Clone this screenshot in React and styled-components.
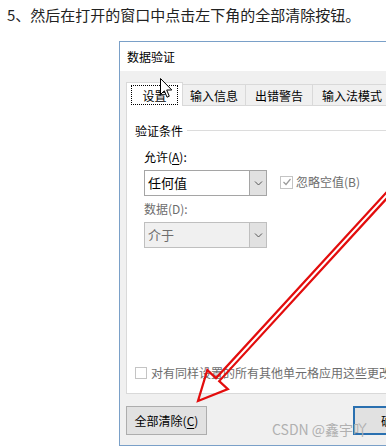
import React from 'react';
import styled, { createGlobalStyle } from 'styled-components';

const GlobalStyle = createGlobalStyle`
  html, body {
    margin:0;
    padding:0;
    background:#fff;
  }
  body {
    width:386px;
    height:446px;
    overflow:hidden;
    font-family:"Noto Sans CJK SC","Noto Sans",sans-serif;
  }
`;

const Page = styled.div`
  position:relative;
  width:386px;
  height:446px;
  overflow:hidden;
`;

const Caption = styled.p`
  margin:0;
  height:41px;
  box-sizing:border-box;
  padding:5px 0 0 7px;
  font-size:15px;
  line-height:20px;
  color:#222;
  white-space:nowrap;
`;

const Dialog = styled.div`
  margin-left:119px;
  width:409px;
  height:405px;
  box-sizing:border-box;
  border:1px solid #7aa0c8;
  background:#f0f0f0;
  display:flex;
  flex-direction:column;
  font-size:12px;
  color:#000;
`;

const TitleBar = styled.div`
  flex:none;
  height:29px;
  background:#fff;
  padding-left:7px;
  line-height:29px;
`;

const Body = styled.div`
  flex:1;
  display:flex;
  flex-direction:column;
  padding:11px 6px 0;
`;

const TabRow = styled.div`
  display:flex;
  align-items:flex-end;
  height:24px;
  margin-bottom:-1px;
  position:relative;
  z-index:1;
`;

const Tab = styled.div`
  flex:none;
  box-sizing:border-box;
  width:${p => p.$w}px;
  height:${p => (p.$active ? 24 : 22)}px;
  margin-left:${p => (p.$first ? 0 : -1)}px;
  border:1px solid #d9d9d9;
  border-bottom:${p => (p.$active ? 'none' : '1px solid #d9d9d9')};
  background:${p => (p.$active ? '#fff' : '#f0f0f0')};
  padding:${p => (p.$active ? '2px 4px 1px' : '0')};
  display:flex;
  align-items:center;
  justify-content:center;
  white-space:nowrap;
`;

const Focus = styled.div`
  flex:1;
  align-self:stretch;
  border:1px dotted #000;
  display:flex;
  align-items:center;
  justify-content:center;
`;

const Panel = styled.div`
  box-sizing:border-box;
  height:289px;
  background:#fff;
  border:1px solid #d9d9d9;
  display:flex;
  flex-direction:column;
  padding:0 0 12px 8px;
`;

const GroupHeader = styled.div`
  margin-top:17px;
  display:flex;
  align-items:center;
  gap:4px;
  line-height:16px;
`;

const Rule = styled.div`
  flex:1;
  height:1px;
  margin-top:-1px;
  background:#dcdcdc;
`;

const Fields = styled.div`
  margin-left:9px;
  display:flex;
  flex-direction:column;
`;

const FieldLabel = styled.div`
  margin-top:${p => p.$top}px;
  line-height:16px;
  color:${p => (p.$disabled ? '#6d6d6d' : '#000')};
  u { text-underline-offset:2px; }
`;

const SelectRow = styled.div`
  margin-top:5px;
  display:flex;
  align-items:flex-start;
  gap:13px;
`;

const Select = styled.div`
  box-sizing:border-box;
  width:123px;
  height:26px;
  display:flex;
  border:1px solid ${p => (p.$disabled ? '#bfbfbf' : '#a5a5a5')};
  background:${p => (p.$disabled ? '#f0f0f0' : '#fff')};
  color:${p => (p.$disabled ? '#6d6d6d' : '#000')};
  font-size:13px;
`;

const SelectValue = styled.div`
  flex:1;
  padding-left:3px;
  line-height:24px;
`;

const SelectButton = styled.div`
  width:16px;
  display:flex;
  align-items:center;
  justify-content:center;
  background:#e1e1e1;
  border-left:1px solid ${p => (p.$disabled ? '#bfbfbf' : '#a5a5a5')};
`;

const CheckLine = styled.label`
  display:flex;
  align-items:center;
  gap:${p => p.$gap}px;
  margin-top:${p => p.$top};
  line-height:16px;
  color:#6d6d6d;
  white-space:nowrap;
`;

const Box = styled.span`
  box-sizing:border-box;
  width:${p => p.$size}px;
  height:${p => p.$size}px;
  flex:none;
  border:1px solid #c4c4c4;
  background:#fff;
  display:flex;
  align-items:center;
  justify-content:center;
`;

const Footer = styled.div`
  display:flex;
  padding-top:12px;
`;

const ButtonGroup = styled.div`
  margin-left:auto;
  display:flex;
  gap:8px;
`;

const Button = styled.div`
  box-sizing:border-box;
  width:${p => p.$w}px;
  height:29px;
  background:#e1e1e1;
  border:${p => (p.$primary ? '2px solid #2a70b0' : '1px solid #adadad')};
  display:flex;
  align-items:center;
  justify-content:center;
  white-space:nowrap;
  u { text-underline-offset:2px; }
`;

const Watermark = styled.div`
  position:absolute;
  z-index:3;
  left:272px;
  top:420px;
  font-size:14px;
  line-height:18px;
  color:#b0b0b0;
  white-space:nowrap;
`;

const Overlay = styled.svg`
  position:absolute;
  z-index:2;
  left:0;
  top:0;
  pointer-events:none;
`;

const Cursor = styled.svg`
  position:absolute;
  z-index:4;
  left:160px;
  top:78px;
`;

function Chevron() {
  return (
    <svg width="9" height="6" viewBox="0 0 9 6">
      <path d="M1 1.5 L4.5 5 L8 1.5" fill="none" stroke="#555" strokeWidth="1" />
    </svg>
  );
}

function Check({ size, checked }) {
  return (
    <Box $size={size}>
      {checked && (
        <svg width="10" height="10" viewBox="0 0 10 10">
          <path d="M1.5 5 L4 7.5 L8.5 2" fill="none" stroke="#9a9a9a" strokeWidth="1.2" />
        </svg>
      )}
    </Box>
  );
}

const tabs = [
  { label: '设置', w: 57, active: true },
  { label: '输入信息', w: 64 },
  { label: '出错警告', w: 68 },
  { label: '输入法模式', w: 80 },
];

export default function App() {
  return (
    <Page>
      <GlobalStyle />
      <Caption>5、然后在打开的窗口中点击左下角的全部清除按钮。</Caption>
      <Dialog>
        <TitleBar>数据验证</TitleBar>
        <Body>
          <TabRow>
            {tabs.map((t, i) => (
              <Tab key={t.label} $w={t.w} $active={t.active} $first={i === 0}>
                {t.active ? <Focus>{t.label}</Focus> : t.label}
              </Tab>
            ))}
          </TabRow>
          <Panel>
            <GroupHeader>
              <span>验证条件</span>
              <Rule />
            </GroupHeader>
            <Fields>
              <FieldLabel $top={10}>允许(<u>A</u>):</FieldLabel>
              <SelectRow>
                <Select>
                  <SelectValue>任何值</SelectValue>
                  <SelectButton><Chevron /></SelectButton>
                </Select>
                <CheckLine $gap={3} $top="4px">
                  <Check size={13} checked />
                  忽略空值(B)
                </CheckLine>
              </SelectRow>
              <FieldLabel $top={5} $disabled>数据(D):</FieldLabel>
              <SelectRow>
                <Select $disabled>
                  <SelectValue>介于</SelectValue>
                  <SelectButton $disabled><Chevron /></SelectButton>
                </Select>
              </SelectRow>
            </Fields>
            <CheckLine $gap={4} $top="auto">
              <Check size={12} />
              对有同样设置的所有其他单元格应用这些更改(P)
            </CheckLine>
          </Panel>
          <Footer>
            <Button $w={81}>全部清除(<u>C</u>)</Button>
            <ButtonGroup>
              <Button $w={80} $primary>确定</Button>
              <Button $w={80}>取消</Button>
            </ButtonGroup>
          </Footer>
        </Body>
      </Dialog>

      <Watermark>CSDN @鑫宇吖</Watermark>

      <Overlay width="386" height="446" viewBox="0 0 386 446">
        <polygon
          points="198,401 227.9,389.1 219.2,381.1 422,160 418.8,157 216,378.1 207.3,370.1"
          fill="none"
          stroke="#e30d0d"
          strokeWidth="2.2"
          strokeLinejoin="miter"
        />
      </Overlay>

      <Cursor width="14" height="21" viewBox="0 0 14 21">
        <path
          d="M0.5 0.5 L0.5 16.5 L4.3 12.8 L7 19.2 L9.3 18.2 L6.7 12 L11.8 12 Z"
          fill="#fff"
          stroke="#000"
          strokeWidth="1"
          strokeLinejoin="miter"
        />
      </Cursor>
    </Page>
  );
}
